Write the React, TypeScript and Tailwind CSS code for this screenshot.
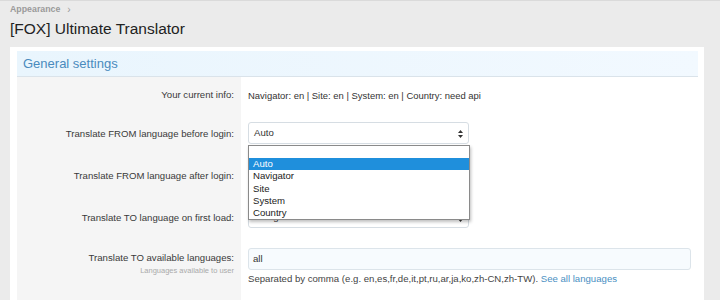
import React from "react";

function SelectBox({ value }: { value: string }) {
  return (
    <div className="relative h-[22px] w-[221px] rounded-[3px] border border-[#d6dde3] bg-white flex items-center pl-[5px] text-[9.6px] text-[#333]">
      <span>{value}</span>
      <svg className="absolute right-[5px] top-[7px]" width="5" height="8" viewBox="0 0 5 8">
        <path d="M2.5 0 L5 3 L0 3 Z" fill="#333" />
        <path d="M2.5 8 L5 5 L0 5 Z" fill="#333" />
      </svg>
    </div>
  );
}

function Row({
  label,
  sub,
  children,
  h,
  top,
}: {
  label: string;
  sub?: string;
  children: React.ReactNode;
  h: string;
  top?: boolean;
}) {
  return (
    <div className={`flex ${h}`}>
      <div
        className={`w-[224px] shrink-0 bg-[#f5f5f5] pr-[7px] flex flex-col ${
          top ? "justify-start pt-[10px]" : "justify-center"
        } items-end text-[9.6px] text-[#3a3a3a]`}
      >
        <span className={top ? "leading-[17px] mt-[1px]" : "leading-[17px]"}>{label}</span>
        {sub && <span className="text-[7.5px] leading-[9px] text-[#aaa]">{sub}</span>}
      </div>
      <div className={`flex-1 pl-[7px] pr-[7px] flex flex-col ${top ? "justify-start pt-[10px]" : "justify-center"}`}>
        {children}
      </div>
    </div>
  );
}

export default function App() {
  return (
    <div className="h-[300px] w-[720px] overflow-hidden bg-[#ebebeb] border-t border-[#dadada] font-[family-name:'Liberation_Sans',Arial,sans-serif]">
      <div className="h-[17px] px-[10px] flex items-center gap-[7px] text-[8.8px] font-bold text-[#9a9a9a]">
        <span>Appearance</span>
        <span className="font-normal text-[10px]">›</span>
      </div>
      <h1 className="px-[10px] text-[15.5px] leading-[22px] text-[#222]">[FOX] Ultimate Translator</h1>
      <div className="relative mt-[7px] ml-[10px] w-[694px] h-[260px] bg-white pt-[4px] pl-[7px] pr-[6px]">
        <div className="h-[26px] border-b border-[#dae3ea] bg-gradient-to-r from-[#e9f5fd] to-[#f2f9ff] flex items-center pl-[6px] text-[13px] text-[#4a8bbd]">
          General settings
        </div>
        <Row label="Your current info:" h="h-[35px]">
          <span className="text-[9.45px] text-[#333] mt-[3px]">
            Navigator: en | Site: en | System: en | Country: need api
          </span>
        </Row>
        <Row label="Translate FROM language before login:" h="h-[42px]">
          <SelectBox value="Auto" />
        </Row>
        <Row label="Translate FROM language after login:" h="h-[42px]">
          <SelectBox value="Navigator" />
        </Row>
        <Row label="Translate TO language on first load:" h="h-[42px]">
          <SelectBox value="Navigator" />
        </Row>
        <Row label="Translate TO available languages:" sub="Languages available to user" h="h-[80px]" top>
          <div className="h-[22px] w-full rounded-[3px] border border-[#dce4ea] bg-[#f7fbfe] flex items-center pl-[4px] text-[9.6px] text-[#333]">
            all
          </div>
          <div className="mt-[2px] text-[9.6px] leading-[14px] text-[#444]">
            Separated by comma (e.g. en,es,fr,de,it,pt,ru,ar,ja,ko,zh-CN,zh-TW).{" "}
            <span className="text-[#4a8fc2]">See all languages</span>
          </div>
        </Row>

        <div className="absolute left-[238px] top-[98px] w-[222px] border border-[#8a8a8a] bg-white shadow-[1px_2px_3px_rgba(0,0,0,0.25)] text-[9.6px] leading-[12.2px] text-[#222]">
          <div className="h-[12.2px]"></div>
          <div className="bg-[#1f8fdc] text-white pl-[4px]">Auto</div>
          <div className="pl-[4px]">Navigator</div>
          <div className="pl-[4px]">Site</div>
          <div className="pl-[4px]">System</div>
          <div className="pl-[4px]">Country</div>
        </div>
      </div>
    </div>
  );
}
